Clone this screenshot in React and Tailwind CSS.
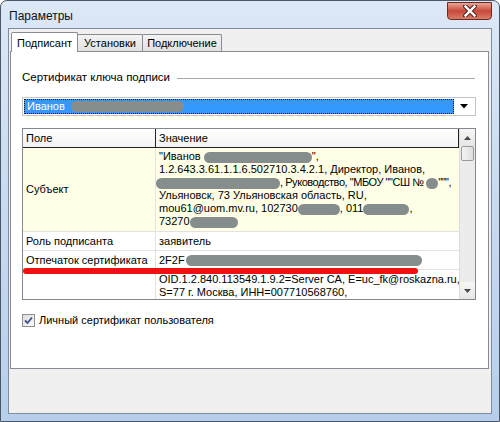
import React from "react";

// grey redaction pill
function Blob({ w, className = "" }) {
  return (
    <span
      className={`inline-block align-middle h-[11px] rounded-full bg-[#858e8d] ${className}`}
      style={{ width: w }}
    />
  );
}

function Tab({ label, active, w }) {
  if (active) {
    return (
      <div
        className="relative z-10 -mb-px h-[20px] bg-white border border-b-0 border-[#898c95] flex items-start pt-[2px] justify-center rounded-t-[2px]"
        style={{ width: w }}
      >
        {label}
      </div>
    );
  }
  return (
    <div
      className="-ml-px h-[17px] bg-gradient-to-b from-[#f3f3f3] to-[#e1e1e1] border border-b-0 border-[#898c95] flex items-center justify-center rounded-t-[2px]"
      style={{ width: w }}
    >
      {label}
    </div>
  );
}

export default function App() {
  return (
    <div className="w-[500px] h-[422px] bg-white font-['Liberation_Sans',Arial,sans-serif] text-[11px] text-black">
      <div className="w-[500px] h-[422px] rounded-t-[7px] border border-[#4b5766] bg-gradient-to-b from-[#dde8f6] via-[#c7daf0] to-[#b7cfeb] flex flex-col px-[7px] pb-[7px]">
        {/* title bar */}
        <div className="h-[27px] flex items-start shrink-0">
          <div className="text-[12px] mt-[8px] ml-px leading-[14px] text-[#111]">Параметры</div>
          <div className="ml-auto mt-px w-[45px] h-[18px] rounded-b-[4px] border border-[#6b2a22] bg-gradient-to-b from-[#e7a597] via-[#c8473a] to-[#d97c66] flex items-center justify-center">
            <svg width="14" height="12" viewBox="0 0 14 12">
              <path d="M2 1 L12 11 M12 1 L2 11" stroke="#5b2a24" strokeWidth="4.5" strokeLinecap="square" />
              <path d="M2.5 1.5 L11.5 10.5 M11.5 1.5 L2.5 10.5" stroke="#ffffff" strokeWidth="2.4" strokeLinecap="square" />
            </svg>
          </div>
        </div>

        {/* client area */}
        <div className="flex-1 border border-[#7c8ca1] bg-[#f0f0f0] flex flex-col">
          {/* tabs */}
          <div className="flex items-end pl-[2px] pt-[2px] h-[22px] shrink-0">
            <Tab label="Подписант" active w={67} />
            <Tab label="Установки" w={66} />
            <Tab label="Подключение" w={80} />
          </div>

          {/* tab panel */}
          <div className="ml-px mr-[2px] h-[318px] bg-white border border-[#898c95] flex flex-col">
            {/* group label */}
            <div className="mt-[19px] h-[14px] flex items-center pl-[11px] pr-[13px]">
              <span className="text-[11.5px]">Сертификат ключа подписи</span>
              <div className="flex-1 ml-[7px] h-px bg-[#a9a9a9]" />
            </div>

            {/* combobox */}
            <div className="mt-[12px] ml-[11px] mr-[12px] h-[19px] border border-[#c2c4c9] flex items-center p-px">
              <div className="flex-1 h-full bg-[#3399ff] border border-dotted border-[#1a1a1a] flex items-center pl-[2px] text-white">
                <span>Иванов</span>
                <Blob w={113} className="ml-[6px]" />
              </div>
              <div className="w-[20px] h-full flex items-center justify-center">
                <svg width="8" height="5" viewBox="0 0 8 5">
                  <path d="M0 0 H8 L4 4.5 Z" fill="#000" />
                </svg>
              </div>
            </div>

            {/* properties list */}
            <div className="mt-[12px] ml-[11px] mr-[12px] h-[172px] border border-[#828790] flex overflow-hidden">
              <div className="flex-1 flex flex-col overflow-hidden">
                {/* header */}
                <div className="h-[19px] shrink-0 grid grid-cols-[133px_1fr] bg-gradient-to-b from-white to-[#f3f3f3] border-b border-[#222] border-r border-r-[#222]">
                  <div className="pl-[3px] flex items-center border-r border-[#222]">Поле</div>
                  <div className="pl-[3px] flex items-center">Значение</div>
                </div>

                {/* Субъект */}
                <div className="h-[84px] shrink-0 grid grid-cols-[133px_1fr] bg-[#fffee6] border-b border-[#e2e2e2]">
                  <div className="pl-[3px] flex items-center border-r border-[#e2e2e2]">Субъект</div>
                  <div className="pl-[3px] pt-[2px] leading-[13px] whitespace-nowrap">
                    <div>
                      "Иванов <Blob w={108} />",
                    </div>
                    <div>1.2.643.3.61.1.1.6.502710.3.4.2.1, Директор, Иванов,</div>
                    <div className="-ml-[3px]">
                      <Blob w={124} />
                      <span className="tracking-[-0.45px]">, Руководство, "МБОУ ""СШ № </span>
                      <Blob w={12} />
                      <span className="tracking-[-0.45px]">""",</span>
                    </div>
                    <div>Ульяновск, 73 Ульяновская область, RU,</div>
                    <div>
                      mou61@uom.mv.ru, 102730<Blob w={42} />, 011<Blob w={46} />,
                    </div>
                    <div>
                      73270<Blob w={48} />
                    </div>
                  </div>
                </div>

                {/* Роль подписанта */}
                <div className="h-[19px] shrink-0 grid grid-cols-[133px_1fr] border-b border-[#e2e2e2]">
                  <div className="pl-[3px] flex items-center border-r border-[#e2e2e2]">Роль подписанта</div>
                  <div className="pl-[3px] flex items-center">заявитель</div>
                </div>

                {/* Отпечаток сертификата */}
                <div className="relative h-[19px] shrink-0 grid grid-cols-[133px_1fr] border-b border-[#e2e2e2]">
                  <div className="pl-[3px] flex items-center border-r border-[#e2e2e2]">Отпечаток сертификата</div>
                  <div className="pl-[3px] flex items-center whitespace-nowrap">
                    2F2F<Blob w={236} className="ml-px" />
                  </div>
                  <div className="absolute left-0 top-[17px] w-[395px] h-[6px] rounded-full bg-[#f01010] z-10" />
                </div>

                {/* Издатель */}
                <div className="h-[40px] shrink-0 grid grid-cols-[133px_1fr]">
                  <div className="border-r border-[#e2e2e2]" />
                  <div className="pl-[3px] pt-[3px] leading-[13px] whitespace-nowrap">
                    <div>OID.1.2.840.113549.1.9.2=Server CA, E=uc_fk@roskazna.ru,</div>
                    <div>S=77 г. Москва, ИНН=007710568760,</div>
                  </div>
                </div>
              </div>

              {/* scrollbar */}
              <div className="w-[16px] bg-[#ececec] border-l border-[#dcdcdc] flex flex-col">
                <div className="h-[17px] flex items-center justify-center bg-gradient-to-b from-[#f7f7f7] to-[#e6e6e6]">
                  <svg width="7" height="4" viewBox="0 0 7 4">
                    <path d="M0 4 H7 L3.5 0 Z" fill="#4a4a4a" />
                  </svg>
                </div>
                <div className="mx-px h-[15px] rounded-[2px] border border-[#9a9a9a] bg-gradient-to-r from-[#f4f4f4] to-[#dedede]" />
                <div className="flex-1" />
                <div className="h-[17px] flex items-center justify-center bg-gradient-to-b from-[#f7f7f7] to-[#e6e6e6]">
                  <svg width="7" height="4" viewBox="0 0 7 4">
                    <path d="M0 0 H7 L3.5 4 Z" fill="#4a4a4a" />
                  </svg>
                </div>
              </div>
            </div>

            {/* checkbox */}
            <div className="mt-[12px] ml-[11px] flex items-center">
              <div className="w-[13px] h-[13px] border border-[#8e8f8f] bg-gradient-to-br from-[#dcdcdc] to-[#fbfbfb] flex items-center justify-center">
                <svg width="9" height="9" viewBox="0 0 9 9">
                  <path d="M1 4.5 L3.5 7 L8 1.5" stroke="#3a4f8f" strokeWidth="1.8" fill="none" />
                </svg>
              </div>
              <span className="ml-[4px]">Личный сертификат пользователя</span>
            </div>
          </div>
        </div>
      </div>
    </div>
  );
}
